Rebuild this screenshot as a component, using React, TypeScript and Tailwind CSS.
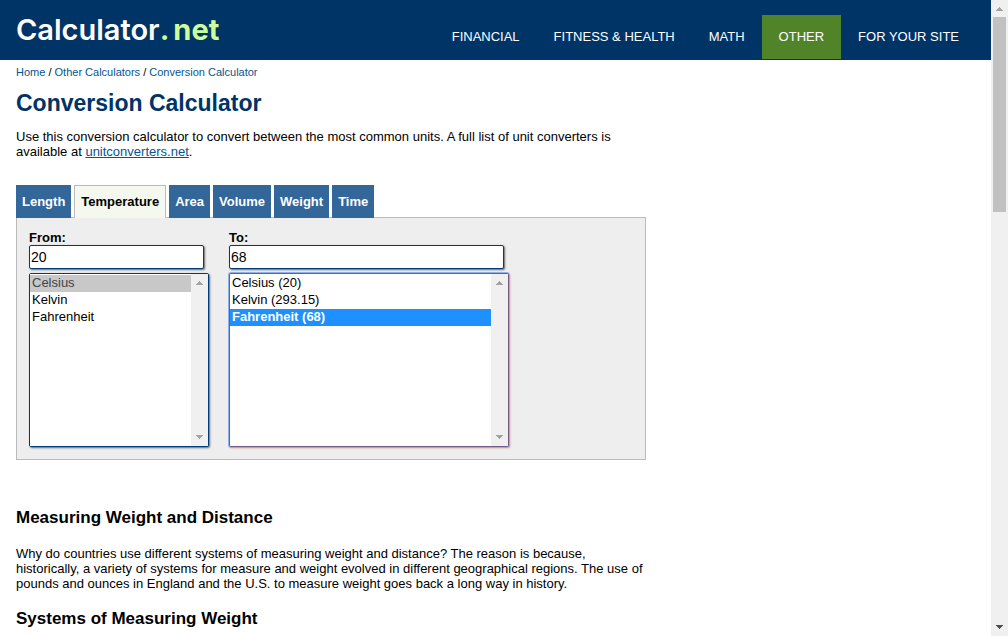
import { useState } from "react";

const navItems = ["FINANCIAL", "FITNESS & HEALTH", "MATH", "OTHER", "FOR YOUR SITE"];
const tabs = ["Length", "Temperature", "Area", "Volume", "Weight", "Time"];

function Arrow({ up = false, className = "" }: { up?: boolean; className?: string }) {
  return (
    <svg viewBox="0 0 7 4" className={`h-1 w-[7px] ${className}`} fill="currentColor" shapeRendering="crispEdges" aria-hidden="true">
      {up ? <path d="M3 0h1v1h1v1h1v1h1v1H0V3h1V2h1V1h1z" /> : <path d="M0 0h7v1H6v1H5v1H4v1H3V3H2V2H1V1H0z" />}
    </svg>
  );
}

function ListScrollbar() {
  return (
    <div className="flex w-[17px] shrink-0 flex-col items-center justify-between bg-[#f0f0f0] py-[7px] text-[#a3a3a3]">
      <Arrow up />
      <Arrow />
    </div>
  );
}

function Header() {
  return (
    <header className="flex h-[60px] items-end justify-between bg-[#003366] pr-[15px] pl-4">
      <a href="#home" className="font-[Inter,sans-serif] text-[29px] leading-[60px] font-semibold text-white">
        Calculator<span className="font-bold text-[#ccff99]">.</span>
        <span className="ml-1 font-bold text-[#ccff99]">net</span>
      </a>
      <nav className="mb-px flex">
        {navItems.map((item) => (
          <a
            key={item}
            href="#nav"
            className={`flex h-11 items-center px-[17px] pb-px text-[13px] leading-4 whitespace-nowrap text-white ${item === "OTHER" ? "bg-[#518428]" : ""}`}
          >
            {item}
          </a>
        ))}
      </nav>
    </header>
  );
}

function Converter() {
  const [active, setActive] = useState("Temperature");
  const [from, setFrom] = useState("20");
  const [to, setTo] = useState("68");
  const option = "block min-h-[17px] px-[2px] pt-0 pb-px text-[13px] leading-4";
  const input =
    "block h-6 rounded-[2px] border border-[#003c7d] bg-white px-[1px] pb-px text-[14px] leading-5 text-black shadow-[1px_1px_2px_#666] outline-none";
  return (
    <section className="mt-[26px] max-w-[630px]">
      <div className="relative flex gap-[3px]" role="tablist">
        {tabs.map((t) => (
          <button
            key={t}
            type="button"
            role="tab"
            aria-selected={t === active}
            onClick={() => setActive(t)}
            className={
              t === active
                ? "h-[33px] border border-b-0 border-[#bbb] bg-[#f5f8ee] px-[6px] text-[13px] leading-4 font-bold text-black"
                : "h-[33px] bg-[#336699] px-[6px] text-[13px] leading-4 font-bold text-white"
            }
          >
            {t}
          </button>
        ))}
      </div>
      <div className="-mt-px flex gap-5 border border-[#bbb] bg-[#eee] px-3 pt-3 pb-3">
        <div className="w-[180px]">
          <label htmlFor="from" className="block text-[13px] leading-[15px] font-bold">From:</label>
          <input id="from" value={from} onChange={(e) => setFrom(e.target.value)} className={`${input} w-[175px]`} />
          <div className="mt-1 flex h-[174px] w-[180px] overflow-hidden rounded-[2px] border border-[#003c7d] bg-white shadow-[1px_1px_2px_#666]">
            <select size={10} defaultValue="Celsius" aria-label="From unit" className="h-full min-w-0 flex-1 overflow-hidden bg-white pt-px outline-none">
              <option value="Celsius" className={`${option} checked:bg-[linear-gradient(#c8c8c8,#c8c8c8)] checked:[-webkit-text-fill-color:#444]`}>Celsius</option>
              <option className={option}>Kelvin</option>
              <option className={option}>Fahrenheit</option>
            </select>
            <ListScrollbar />
          </div>
        </div>
        <div className="w-[280px]">
          <label htmlFor="to" className="block text-[13px] leading-[15px] font-bold">To:</label>
          <input id="to" value={to} onChange={(e) => setTo(e.target.value)} className={`${input} w-[275px]`} />
          <div className="mt-1 flex h-[174px] w-[280px] overflow-hidden rounded-[2px] border border-[#735a8c] bg-white shadow-[0_0_0_1px_#8fb0ee,1px_1px_2px_#e08a60]">
            <select size={10} defaultValue="Fahrenheit" aria-label="To unit" className="h-full min-w-0 flex-1 overflow-hidden bg-white pt-px outline-none">
              <option value="Celsius" className={option}>Celsius (20)</option>
              <option value="Kelvin" className={option}>Kelvin (293.15)</option>
              <option value="Fahrenheit" className={`${option} checked:bg-[linear-gradient(#1e90ff,#1e90ff)] checked:font-bold checked:[-webkit-text-fill-color:#fff]`}>Fahrenheit (68)</option>
            </select>
            <ListScrollbar />
          </div>
        </div>
      </div>
    </section>
  );
}

export default function App() {
  return (
    <div className="flex h-screen overflow-hidden bg-white font-['Liberation_Sans',Arial,sans-serif] text-black">
      <div className="min-w-0 flex-1">
        <Header />
        <main className="max-w-[662px] px-4 pt-[5px]">
          <div className="text-[11px] leading-[14px]">
            <a href="#home" className="text-[#065490]">Home</a> /{" "}
            <a href="#other" className="text-[#065490]">Other Calculators</a> /{" "}
            <a href="#conversion" className="text-[#065490]">Conversion Calculator</a>
          </div>
          <h1 className="mt-[10px] text-[23px] leading-7 font-bold text-[#003366]">Conversion Calculator</h1>
          <p className="mt-3 text-[13px] leading-[15px]">
            Use this conversion calculator to convert between the most common units. A full list of unit converters is available at{" "}
            <a href="#units" className="text-[#065490] underline">unitconverters.net</a>.
          </p>
          <Converter />
          <h2 className="mt-12 text-[17px] leading-5 font-bold">Measuring Weight and Distance</h2>
          <p className="mt-[18px] text-[13px] leading-[15px]">
            Why do countries use different systems of measuring weight and distance? The reason is because, historically, a variety of systems for measure and weight evolved in different geographical regions. The use of pounds and ounces in England and the U.S. to measure weight goes back a long way in history.
          </p>
          <h2 className="mt-[18px] text-[17px] leading-5 font-bold">Systems of Measuring Weight</h2>
        </main>
      </div>
      <div className="flex w-[17px] shrink-0 flex-col items-center bg-[#f0f0f0] pt-[7px] pb-[7px]" aria-hidden="true">
        <Arrow up className="text-[#a3a3a3]" />
        <div className="mt-[6px] h-[195px] w-[13px] bg-[#c1c1c1]" />
        <Arrow className="mt-auto text-[#505050]" />
      </div>
    </div>
  );
}
